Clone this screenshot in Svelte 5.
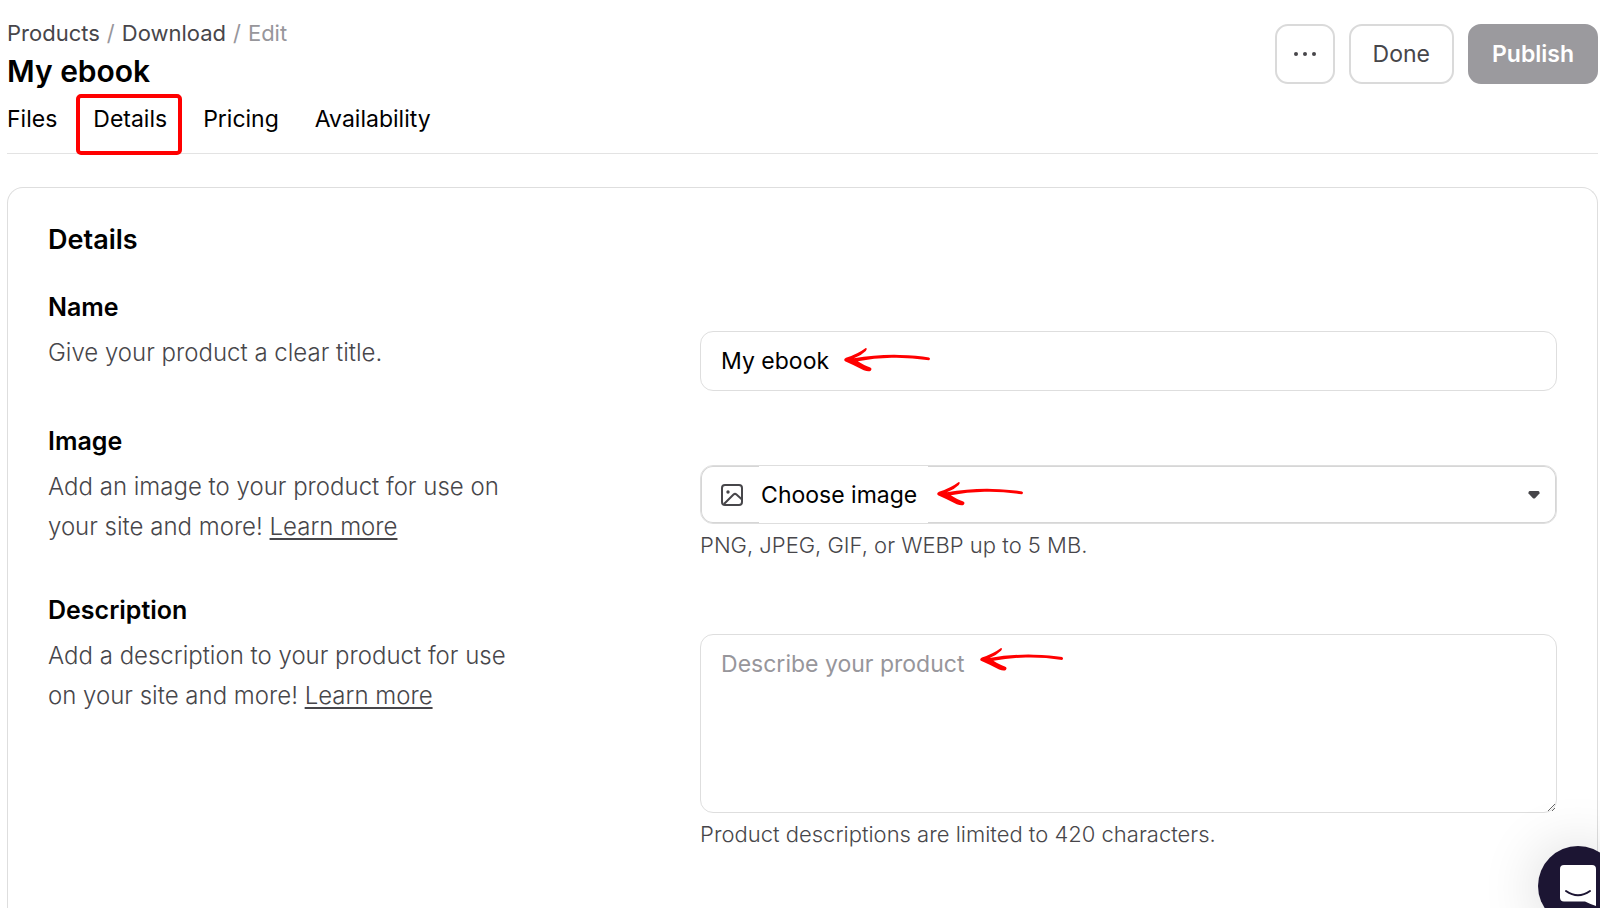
<script>
    let name = $state('My ebook');
    let image = $state('');
    let description = $state('');

    const tabs = ['Files', 'Details', 'Pricing', 'Availability'];
    let activeTab = $state('Details');
</script>

{#snippet arrow(place)}
    <svg class="arrow {place}" viewBox="0 0 88 26" aria-hidden="true">
        <path d="M22 1 Q24 1 22 4 Q17 9 10 11.500 Q32 7.500 56 8 Q74 8.500 86 10.500 Q88 12 86 13.500 Q66 10.500 48 11 Q30 11.500 14 14.500 Q21 19 26 20.500 Q29 21.500 27 24 Q25 25.500 20 23.500 Q10 18.500 1 14.500 Q-1 12.500 2 11 Q14 7 22 1Z" />
    </svg>
{/snippet}

<div class="page">
    <header>
        <div class="heading">
            <nav class="breadcrumb" aria-label="Breadcrumb">
                <a href="#products">Products</a>
                <span>/</span>
                <a href="#download">Download</a>
                <span>/</span>
                <span>Edit</span>
            </nav>
            <h1>My ebook</h1>
        </div>
        <div class="actions">
            <button class="more" aria-label="More options">
                <svg width="22" height="6" viewBox="0 0 22 6" aria-hidden="true">
                    <circle cx="2" cy="3" r="2" />
                    <circle cx="11" cy="3" r="2" />
                    <circle cx="20" cy="3" r="2" />
                </svg>
            </button>
            <button>Done</button>
            <button class="publish">Publish</button>
        </div>
    </header>

    <nav class="tabs">
        {#each tabs as tab}
            <a href="#{tab.toLowerCase()}" class:active={tab === activeTab} onclick={() => (activeTab = tab)}>{tab}</a>
        {/each}
    </nav>

    <main>
        <h2>Details</h2>

        <section>
            <div class="info">
                <label for="name">Name</label>
                <p>Give your product a clear title.</p>
            </div>
            <div class="field">
                <input id="name" type="text" bind:value={name} />
                {@render arrow('at-name')}
            </div>
        </section>

        <section>
            <div class="info">
                <label for="image">Image</label>
                <p>Add an image to your product for use on your site and more! <a href="#learn-images">Learn more</a></p>
            </div>
            <div class="field">
                <div class="picker">
                    <svg class="picture" width="22" height="22" viewBox="0 0 22 22" aria-hidden="true">
                        <rect x="1" y="1" width="20" height="20" rx="3" />
                        <path d="M3 20 L12.500 10.500 Q14 9.300 15.500 10.500 L21 15.500" />
                        <circle cx="7" cy="8" r="1.700" />
                    </svg>
                    <select id="image" bind:value={image}>
                        <option value="">Choose image</option>
                    </select>
                    <svg class="caret" width="12" height="8" viewBox="0 0 12 8" aria-hidden="true">
                        <path d="M1.500 0 H10.500 Q12 0.500 11.500 2.500 L7 7.200 Q6 8 5 7.200 L0.500 2.500 Q0 0.500 1.500 0Z" />
                    </svg>
                </div>
                {@render arrow('at-image')}
                <small>PNG, JPEG, GIF, or WEBP up to 5 MB.</small>
            </div>
        </section>

        <section>
            <div class="info">
                <label for="description">Description</label>
                <p>Add a description to your product for use on your site and more! <a href="#learn-descriptions">Learn more</a></p>
            </div>
            <div class="field">
                <textarea id="description" placeholder="Describe your product" maxlength="420" bind:value={description}></textarea>
                {@render arrow('at-description')}
                <small>Product descriptions are limited to 420 characters.</small>
            </div>
        </section>
    </main>

    <button class="chat" aria-label="Open chat">
        <svg width="36" height="42" viewBox="0 0 36 42" aria-hidden="true">
            <path class="bubble" d="M4 0 H32 Q36 0 36 4 V41 Q30 39 25 36.500 H4 Q0 36.500 0 32.500 V4 Q0 0 4 0Z" />
            <path class="smile" d="M6 26 Q18 34.500 30 26" />
        </svg>
    </button>
</div>

<style>
    :global(body) {
        margin: 0;
        background: #fff;
    }

    .page {
        box-sizing: border-box;
        min-height: 100vh;
        padding: 19px 2px 0 7px;
        display: flex;
        flex-direction: column;
        font-family: Inter, sans-serif;
        font-size: 23px;
        color: #000;
    }

    header {
        display: flex;
        justify-content: space-between;
    }

    .breadcrumb {
        display: flex;
        gap: 7px;
        font-size: 22px;
        line-height: 28px;
        color: #97969b;
    }

    .breadcrumb a {
        color: #47464a;
        text-decoration: none;
    }

    h1 {
        margin: 4px 0 0;
        font-size: 30px;
        line-height: 40px;
        font-weight: 600;
    }

    .actions {
        display: flex;
        align-items: flex-start;
        gap: 14px;
        padding-top: 5px;
    }

    button {
        font: inherit;
        cursor: pointer;
    }

    .actions button {
        box-sizing: border-box;
        height: 60px;
        padding: 0 22px;
        border: 2px solid #dadada;
        border-radius: 13px;
        background: #fff;
        color: #47464a;
        font-size: 23px;
    }

    .actions .more {
        width: 60px;
        padding: 0;
        display: flex;
        align-items: center;
        justify-content: center;
        fill: #47464a;
    }

    .actions .publish {
        border-color: #9b9a9e;
        background: #9b9a9e;
        color: #fff;
        font-weight: 600;
    }

    .tabs {
        display: flex;
        gap: 36px;
        padding-bottom: 19px;
        border-bottom: 1px solid #e3e3e3;
    }

    .tabs a {
        position: relative;
        padding-top: 13px;
        line-height: 30px;
        color: #000;
        text-decoration: none;
    }

    .tabs .active::after {
        content: '';
        position: absolute;
        inset: 3px -15px -21px -17px;
        border: 4px solid #f00;
        border-radius: 5px;
    }

    main {
        flex: 1;
        margin-top: 33px;
        padding: 36px 40px 0;
        border: 1px solid #dedede;
        border-bottom: 0;
        border-radius: 16px 16px 0 0;
    }

    h2 {
        margin: 0 0 35px;
        font-size: 27px;
        line-height: 32px;
        font-weight: 600;
    }

    section {
        display: grid;
        grid-template-columns: 5fr 7fr;
        gap: 40px;
        margin-bottom: 34px;
    }

    label {
        display: block;
        font-size: 25px;
        line-height: 32px;
        font-weight: 600;
    }

    .info p {
        max-width: 470px;
        margin: 10px 0 0;
        font-size: 24px;
        line-height: 40px;
        font-weight: 300;
        color: #47464a;
    }

    .info a {
        color: inherit;
        text-underline-offset: 3px;
    }

    .field {
        position: relative;
        padding-top: 40px;
    }

    input,
    .picker,
    textarea {
        box-sizing: border-box;
        display: block;
        width: 100%;
        height: 60px;
        padding: 0 20px;
        border: 1px solid #dedede;
        border-radius: 13px;
        background: #fff;
        font: inherit;
        color: #000;
    }

    .picker {
        display: flex;
        align-items: center;
        height: 59px;
        box-shadow: inset 0 0 0 1px #d6d6d6;
    }

    select {
        appearance: none;
        align-self: stretch;
        margin-left: 16px;
        padding: 0 10px 0 2px;
        border: 0;
        background: #fff;
        font: inherit;
        color: #000;
    }

    .picture {
        fill: none;
        stroke: #47464a;
        stroke-width: 2;
    }

    .picture circle {
        fill: #47464a;
        stroke: none;
    }

    .caret {
        margin-left: auto;
        margin-right: -4px;
        fill: #47464a;
    }

    textarea {
        height: 179px;
        padding: 14px 20px;
        line-height: 30px;
        resize: vertical;
    }

    textarea::placeholder {
        color: #97969b;
        opacity: 1;
    }

    small {
        display: block;
        margin-top: 6px;
        font-size: 22px;
        line-height: 30px;
        font-weight: 300;
        color: #47464a;
    }

    .arrow {
        position: absolute;
        top: 56px;
        width: 87px;
        fill: #f00;
    }

    .at-name {
        left: 144px;
    }

    .at-image {
        left: 237px;
    }

    .at-description {
        left: 280px;
        top: 53px;
        width: 84px;
    }

    .chat {
        position: fixed;
        right: -18px;
        bottom: -18px;
        width: 80px;
        height: 80px;
        padding: 0;
        display: flex;
        align-items: center;
        justify-content: center;
        border: 0;
        border-radius: 50%;
        background: #1c1533;
        box-shadow: 0 2px 60px rgba(0, 0, 0, 0.16);
    }

    .bubble {
        fill: #fff;
    }

    .smile {
        fill: none;
        stroke: #1c1533;
        stroke-width: 2;
        stroke-linecap: round;
    }
</style>
